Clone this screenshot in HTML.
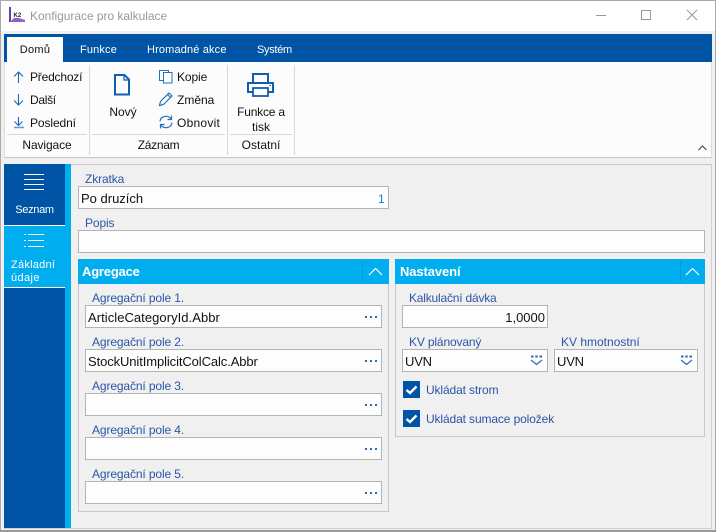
<!DOCTYPE html>
<html lang="cs"><head><meta charset="utf-8"><title>Konfigurace pro kalkulace</title>
<style>
html,body{margin:0;padding:0;background:#f0f0f0}
#w{position:relative;width:716px;height:532px;overflow:hidden;background:#f0f0f0;font-family:"Liberation Sans",sans-serif;font-size:12px;color:#111}
#w div,#w svg{position:absolute;box-sizing:border-box}
.t{white-space:nowrap;line-height:16px;height:16px}
.l{color:#2a55a8;white-space:nowrap;line-height:16px;height:16px;letter-spacing:-.12px}
.i{background:#fdfdfd;border:1px solid #b4b4b4;height:23px}
.v{font-size:13px;color:#111;white-space:nowrap;line-height:16px;height:16px}
.h{background:#00adef;height:25px;color:#fff;font-weight:bold;font-size:13px;line-height:26px;padding-left:4px;letter-spacing:-.2px}
.p{border:1px solid #c8c8c8;border-top:none}
.s{background:#d8d8d8}
.c{text-align:center}
#w .d{left:365px;width:2px;height:2px;background:#2a6ab8;box-shadow:5px 0 0 #2a6ab8,10px 0 0 #2a6ab8}
.b{background:#0054a6;width:17px;height:17px}
</style></head><body><div id="w">
<div style="left:0;top:0;width:716px;height:31px;background:#fff"></div>
<div style="left:0;top:0;width:716px;height:1px;background:#aaa"></div>
<div style="left:0;top:0;width:1px;height:532px;background:#aaa"></div>
<div style="left:715px;top:0;width:1px;height:532px;background:#aaa"></div>
<div style="left:0;top:530px;width:716px;height:2px;background:#999"></div>

<svg style="left:8px;top:6px" width="18" height="18" viewBox="0 0 18 18"><rect x="1" y="1" width="2" height="15" fill="#6a3fa8"/><text x="5.500" y="11" font-family="Liberation Sans" font-size="6" font-weight="bold" fill="#222">K2</text><path d="M2 16 L6 12 L11 12 L17 14 V16Z" fill="#8b63c8"/></svg>
<div class="t" style="left:30px;top:8px;color:#999;font-size:12px;letter-spacing:-.04px">Konfigurace pro kalkulace</div>
<svg style="left:590px;top:5px" width="120" height="20" viewBox="0 0 120 20" fill="none" stroke="#999"><path d="M6 10.500H16"/><rect x="51.500" y="5.500" width="9" height="9"/><path d="M97 5L107 15M107 5L97 15"/></svg>

<div style="left:4px;top:34px;width:708px;height:28px;background:#0054a6"></div>
<div class="c" style="left:7px;top:37px;width:56px;height:25px;background:#fcfcfc;line-height:26px;font-size:11px;letter-spacing:.3px">Domů</div>
<div class="t" style="left:80px;top:42px;color:#fff;font-size:11px;letter-spacing:.15px">Funkce</div>
<div class="t" style="left:147px;top:42px;color:#fff;font-size:11px;letter-spacing:.15px">Hromadné akce</div>
<div class="t" style="left:257px;top:42px;color:#fff;font-size:11px;letter-spacing:-.3px">Systém</div>

<div style="left:4px;top:62px;width:708px;height:96px;background:#fcfcfc;border-bottom:1px solid #c4c4c4;border-left:1px solid #ddd;border-right:1px solid #ddd"></div>

<svg style="left:12px;top:68px" width="14" height="66" viewBox="0 0 14 66" fill="none" stroke="#1f68b8" stroke-width="1.100"><path d="M6.500 4V15M2 8.500L6.500 4L11 8.500"/><path d="M6.500 26V37M2 32.500L6.500 37L11 32.500"/><path d="M6.500 49V57.500M2.500 53.500L6.500 57.500L10.500 53.500"/><path d="M2 59.500H12" stroke="#5a9bd8" stroke-width="1.500"/></svg>
<div class="t" style="left:30px;top:69px;letter-spacing:-.2px">Předchozí</div>
<div class="t" style="left:30px;top:92px;letter-spacing:-.3px">Další</div>
<div class="t" style="left:30px;top:115px;letter-spacing:-.1px">Poslední</div>
<div class="s" style="left:7px;top:134px;width:80px;height:1px"></div>
<div class="t c" style="left:7px;top:137px;width:80px;letter-spacing:-.1px">Navigace</div>
<div class="s" style="left:89px;top:65px;width:1px;height:90px"></div>

<svg style="left:112px;top:73px" width="22" height="24" viewBox="0 0 22 24" fill="none" stroke="#0f5fb0" stroke-width="2"><path d="M3 2H12.500L17 6.500V21.500H3Z"/><path d="M12 2V7H17" stroke-width="1.200"/></svg>
<div class="t c" style="left:103px;top:104px;width:40px">Nový</div>
<svg style="left:158px;top:68px" width="16" height="16" viewBox="0 0 16 16" fill="none" stroke="#2570c0"><path d="M5 12.500H1.500V2.500H10.500V4"/><rect x="5.500" y="4.500" width="8.500" height="10.500" fill="#fff"/></svg>
<div class="t" style="left:177px;top:69px;letter-spacing:-.1px">Kopie</div>
<svg style="left:158px;top:91px" width="16" height="16" viewBox="0 0 16 16" fill="none" stroke="#2570c0" stroke-width="1.200"><path d="M1.500 14.500L2.500 10.500L11 2L14 5L5.500 13.500Z"/><path d="M9.500 3.500L12.500 6.500"/></svg>
<div class="t" style="left:177px;top:92px">Změna</div>
<svg style="left:158px;top:114px" width="16" height="16" viewBox="0 0 16 16" fill="none" stroke="#2570c0" stroke-width="1.200"><path d="M2 7.500C2.500 2 10 0.500 13 5M13.500 1.500V5.500H9.500"/><path d="M14 8.500C13.500 14 6 15.500 3 11M2.500 14.500V10.500H6.500"/></svg>
<div class="t" style="left:177px;top:115px;letter-spacing:.25px">Obnovit</div>
<div class="s" style="left:92px;top:134px;width:133px;height:1px"></div>
<div class="t c" style="left:92px;top:137px;width:133px;letter-spacing:-.3px">Záznam</div>
<div class="s" style="left:227px;top:65px;width:1px;height:90px"></div>

<svg style="left:246px;top:71px" width="30" height="27" viewBox="0 0 30 27" fill="none" stroke="#0f5fb0" stroke-width="2"><path d="M7 12V3H22V12"/><path d="M7 21H2V12H27V21H22"/><rect x="7" y="17" width="15" height="8" stroke-width="1.800"/><path d="M23.500 14.500H25" stroke-width="1.200"/></svg>
<div class="t c" style="left:230px;top:104px;width:62px;letter-spacing:-.2px">Funkce a</div>
<div class="t c" style="left:230px;top:119px;width:62px">tisk</div>
<div class="s" style="left:230px;top:134px;width:62px;height:1px"></div>
<div class="t c" style="left:230px;top:137px;width:62px">Ostatní</div>
<div class="s" style="left:294px;top:65px;width:1px;height:90px"></div>
<svg style="left:697px;top:144px" width="11" height="8" viewBox="0 0 11 8" fill="none" stroke="#444" stroke-width="1.100"><path d="M1.500 6L5.500 2L9.500 6"/></svg>

<div style="left:4px;top:164px;width:708px;height:1px;background:#c8c8c8"></div>
<div style="left:4px;top:528px;width:708px;height:1px;background:#d0d0d0"></div>
<div style="left:711px;top:164px;width:1px;height:365px;background:#d0d0d0"></div>
<div style="left:4px;top:164px;width:61px;height:364px;background:#0054a6"></div>
<div style="left:65px;top:164px;width:6px;height:364px;background:#00adef"></div>
<svg style="left:24px;top:173px" width="20" height="18" viewBox="0 0 20 18" stroke="#fff"><path d="M0 1.500H20M0 6.500H20M0 11.500H20M0 16.500H20"/></svg>
<div class="t c" style="left:4px;top:202px;width:61px;color:#fff;font-size:11px;letter-spacing:-.3px">Seznam</div>
<div style="left:4px;top:225px;width:61px;height:1px;background:#fff"></div>
<div style="left:4px;top:226px;width:61px;height:61px;background:#00adef"></div>
<svg style="left:24px;top:233px" width="20" height="16" viewBox="0 0 20 16" stroke="#fff"><path d="M4 1.500H20M4 7.500H20M4 13.500H20M0 1.500H2M0 7.500H2M0 13.500H2"/></svg>
<div class="t" style="left:11px;top:257px;color:#fff;font-size:11px;letter-spacing:.25px">Základní</div>
<div class="t" style="left:11px;top:270px;color:#fff;font-size:11px;letter-spacing:.4px">údaje</div>
<div style="left:4px;top:287px;width:61px;height:1px;background:#fff"></div>

<div class="l" style="left:85px;top:171px">Zkratka</div>
<div class="i" style="left:78px;top:186px;width:311px"></div>
<div class="v" style="left:81px;top:191px">Po druzích</div>
<div class="t" style="left:378px;top:191px;color:#1e7fd0">1</div>
<div class="l" style="left:85px;top:215px">Popis</div>
<div class="i" style="left:78px;top:230px;width:627px"></div>

<div class="p" style="left:78px;top:284px;width:311px;height:228px"></div>
<div class="h" style="left:78px;top:259px;width:311px">Agregace</div>
<div style="left:362px;top:261px;width:1px;height:21px;background:#0a97d8"></div>
<svg style="left:368px;top:267px" width="15" height="9" viewBox="0 0 15 9" fill="none" stroke="#fff" stroke-width="1.200"><path d="M1 8L7.500 1.500L14 8"/></svg>

<div class="l" style="left:92px;top:290px">Agregační pole 1.</div>
<div class="i" style="left:85px;top:305px;width:297px"></div>
<div class="v" style="left:88px;top:310px;letter-spacing:.05px">ArticleCategoryId.Abbr</div>
<div class="d" style="top:316px"></div>
<div class="l" style="left:92px;top:334px">Agregační pole 2.</div>
<div class="i" style="left:85px;top:349px;width:297px"></div>
<div class="v" style="left:88px;top:354px;letter-spacing:-.1px">StockUnitImplicitColCalc.Abbr</div>
<div class="d" style="top:360px"></div>
<div class="l" style="left:92px;top:378px">Agregační pole 3.</div>
<div class="i" style="left:85px;top:393px;width:297px"></div>
<div class="d" style="top:404px"></div>
<div class="l" style="left:92px;top:422px">Agregační pole 4.</div>
<div class="i" style="left:85px;top:437px;width:297px"></div>
<div class="d" style="top:448px"></div>
<div class="l" style="left:92px;top:466px">Agregační pole 5.</div>
<div class="i" style="left:85px;top:481px;width:297px"></div>
<div class="d" style="top:492px"></div>

<div class="p" style="left:395px;top:284px;width:310px;height:153px"></div>
<div class="h" style="left:395px;top:259px;width:310px;padding-left:5px;letter-spacing:-.1px">Nastavení</div>
<div style="left:680px;top:261px;width:1px;height:21px;background:#0a97d8"></div>
<svg style="left:685px;top:267px" width="15" height="9" viewBox="0 0 15 9" fill="none" stroke="#fff" stroke-width="1.200"><path d="M1 8L7.500 1.500L14 8"/></svg>

<div class="l" style="left:409px;top:290px;letter-spacing:-.2px">Kalkulační dávka</div>
<div class="i" style="left:402px;top:305px;width:146px"></div>
<div class="v" style="left:402px;top:310px;width:143px;text-align:right">1,0000</div>
<div class="l" style="left:409px;top:334px;letter-spacing:-.15px">KV plánovaný</div>
<div class="i" style="left:402px;top:349px;width:146px"></div>
<div class="v" style="left:405px;top:354px;letter-spacing:-.2px">UVN</div>
<svg style="left:530px;top:355px" width="13" height="11" viewBox="0 0 13 11" fill="none" stroke="#2a6ab8"><path d="M1 1.500H3.500M5.250 1.500H7.750M9.500 1.500H12" stroke-width="2"/><path d="M1 5L6.500 9.500L12 5" stroke-width="1.200"/></svg>
<div class="l" style="left:561px;top:334px;letter-spacing:0">KV hmotnostní</div>
<div class="i" style="left:554px;top:349px;width:144px"></div>
<div class="v" style="left:557px;top:354px;letter-spacing:-.2px">UVN</div>
<svg style="left:680px;top:355px" width="13" height="11" viewBox="0 0 13 11" fill="none" stroke="#2a6ab8"><path d="M1 1.500H3.500M5.250 1.500H7.750M9.500 1.500H12" stroke-width="2"/><path d="M1 5L6.500 9.500L12 5" stroke-width="1.200"/></svg>

<div class="b" style="left:403px;top:381px"></div>
<svg style="left:403px;top:381px" width="17" height="17" viewBox="0 0 17 17" fill="none" stroke="#fff" stroke-width="2.400"><path d="M3.500 9L7 12L13.500 5.500"/></svg>
<div class="l" style="left:426px;top:382px">Ukládat strom</div>
<div class="b" style="left:403px;top:410px"></div>
<svg style="left:403px;top:410px" width="17" height="17" viewBox="0 0 17 17" fill="none" stroke="#fff" stroke-width="2.400"><path d="M3.500 9L7 12L13.500 5.500"/></svg>
<div class="l" style="left:426px;top:411px">Ukládat sumace položek</div>
</div></body></html>
